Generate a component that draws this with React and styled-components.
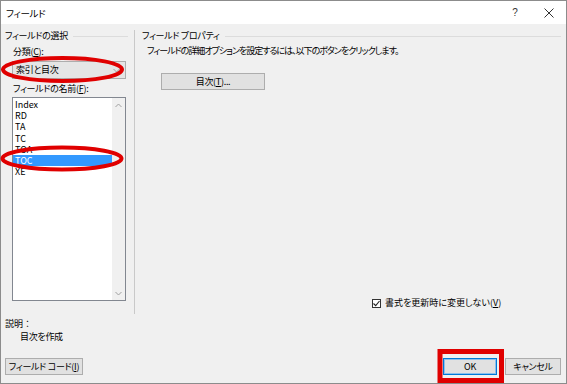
import React from "react";
import styled, { createGlobalStyle } from "styled-components";

const GlobalStyle = createGlobalStyle`
  html, body {
    margin: 0;
    padding: 0;
    background: #ffffff;
  }
  body {
    font-family: "Noto Sans CJK JP", "Noto Sans", sans-serif;
    font-feature-settings: "palt";
    font-size: 9px;
    letter-spacing: -0.3px;
    color: #000000;
  }
  * {
    box-sizing: border-box;
  }
`;

const Window = styled.div`
  position: relative;
  width: 567px;
  height: 384px;
  border: 1px solid #8c8c8c;
  display: flex;
  flex-direction: column;
  background: #f0f0f0;
`;

const TitleBar = styled.div`
  height: 23px;
  flex: none;
  background: #ffffff;
  display: flex;
  align-items: center;
  padding-left: 5px;
`;

const Title = styled.div`
  flex: 1;
  line-height: 12px;
  padding-top: 1px;
  font-size: 9.5px;
`;

const TitleButton = styled.div`
  width: 34px;
  height: 23px;
  display: flex;
  align-items: center;
  justify-content: center;
  color: #333;
  font-family: "Liberation Sans", sans-serif;
  font-size: 10px;
`;

const Body = styled.div`
  flex: 1;
  display: flex;
  flex-direction: column;
`;

const MainRow = styled.div`
  height: 290px;
  flex: none;
  display: flex;
`;

const LeftPanel = styled.div`
  width: 133px;
  flex: none;
  padding: 6px 6px 0 4px;
  display: flex;
  flex-direction: column;
`;

const RightPanel = styled.div`
  flex: 1;
  margin-top: 6px;
  border-left: 1px solid #c9c9c9;
  padding: 0 5px 0 7px;
  display: flex;
  flex-direction: column;
`;

const GroupHeader = styled.div`
  display: flex;
  align-items: center;
  height: 12px;
  line-height: 12px;
  gap: 5px;
  white-space: nowrap;

  &::after {
    content: "";
    flex: 1;
    height: 1px;
    background: #dcdcdc;
  }
`;

const FieldLabel = styled.div`
  line-height: 12px;
  margin-top: ${p => p.$top}px;
  margin-left: 8px;
`;

const Combo = styled.div`
  margin: 3px 2px 0 7px;
  height: 18px;
  background: #e5e5e5;
  border: 1px solid #adadad;
  display: flex;
  align-items: center;
  justify-content: space-between;
  padding: 0 5px 0 3px;
  line-height: 12px;
`;

const ListBox = styled.div`
  margin: 2px 2px 0 7px;
  height: 204px;
  background: #ffffff;
  border: 1px solid #828790;
  display: flex;
`;

const ListItems = styled.div`
  flex: 1;
  padding-top: 1px;
  letter-spacing: 0;
`;

const ListItem = styled.div`
  height: 11.2px;
  line-height: 11.2px;
  padding-left: 2px;
  background: ${p => (p.$selected ? "#3399ff" : "transparent")};
  color: ${p => (p.$selected ? "#ffffff" : "#000000")};
`;

const ScrollBar = styled.div`
  width: 13px;
  flex: none;
  background: #f0f0f0;
  display: flex;
  flex-direction: column;
  justify-content: space-between;
  align-items: center;
  padding: 5px 0 4px;
`;

const Description = styled.p`
  margin: ${p => p.$top}px 0 0;
  padding: 0 0 0 ${p => p.$indent}px;
  line-height: 12px;
`;

const DescLabel = styled(Description)`
  font-feature-settings: normal;
  letter-spacing: 0;
`;

const PropsText = styled.div`
  margin: 3px 0 0 5px;
  line-height: 12px;
  letter-spacing: -1px;
  white-space: nowrap;
`;

const Button = styled.button`
  height: 17px;
  width: ${p => p.$width}px;
  padding: 0;
  font-family: inherit;
  font-feature-settings: "palt";
  font-size: 9px;
  letter-spacing: -0.3px;
  line-height: 12px;
  white-space: nowrap;
  color: #000;
  background: #e1e1e1;
  border: 1px solid ${p => (p.$default ? "#0078d7" : "#adadad")};
  box-shadow: ${p => (p.$default ? "inset 0 0 0 1px #8cc0ec" : "none")};
`;

const TocButton = styled(Button)`
  margin: 16px 0 0 19px;
  align-self: flex-start;
`;

const CheckRow = styled.label`
  margin: auto 0 5px 230px;
  display: flex;
  align-items: center;
  gap: 4px;
  line-height: 12px;
  letter-spacing: 0;
`;

const CheckBox = styled.span`
  width: 9px;
  height: 9px;
  border: 1px solid #333;
  background: #fff;
  display: flex;
  align-items: center;
  justify-content: center;
`;

const Footer = styled.div`
  margin-top: 15px;
  padding: 0 5px 0 4px;
  display: flex;
  align-items: center;
  gap: 8px;
`;

const FooterSpacer = styled.div`
  flex: 1;
`;

const Underline = styled.span`
  text-decoration: underline;
`;

const Marks = styled.svg`
  position: absolute;
  left: -1px;
  top: -1px;
  pointer-events: none;
`;

const Chevron = ({ up }) => (
  <svg width="7" height="5" viewBox="0 0 7 5">
    <path
      d={up ? "M0.5 4 L3.5 1 L6.5 4" : "M0.5 1 L3.5 4 L6.5 1"}
      fill="none"
      stroke="#a0a0a0"
      strokeWidth="1"
    />
  </svg>
);

const fields = ["Index", "RD", "TA", "TC", "TOA", "TOC", "XE"];

export default function App() {
  return (
    <>
      <GlobalStyle />
      <Window>
        <TitleBar>
          <Title>フィールド</Title>
          <TitleButton>?</TitleButton>
          <TitleButton>
            <svg width="10" height="10" viewBox="0 0 10 10">
              <path d="M0.5 0.5 L9.5 9.5 M9.5 0.5 L0.5 9.5" stroke="#333" strokeWidth="1" />
            </svg>
          </TitleButton>
        </TitleBar>
        <Body>
          <MainRow>
            <LeftPanel>
              <GroupHeader>フィールドの選択</GroupHeader>
              <FieldLabel $top={4}>
                分類(<Underline>C</Underline>):
              </FieldLabel>
              <Combo>
                <span>索引と目次</span>
                <Chevron />
              </Combo>
              <FieldLabel $top={4}>
                フィールドの名前(<Underline>F</Underline>):
              </FieldLabel>
              <ListBox>
                <ListItems>
                  {fields.map(f => (
                    <ListItem key={f} $selected={f === "TOC"}>
                      {f}
                    </ListItem>
                  ))}
                </ListItems>
                <ScrollBar>
                  <Chevron up />
                  <Chevron />
                </ScrollBar>
              </ListBox>
            </LeftPanel>
            <RightPanel>
              <GroupHeader>フィールド プロパティ</GroupHeader>
              <PropsText>
                フィールドの詳細オプションを設定するには、以下のボタンをクリックします。
              </PropsText>
              <TocButton $width={104}>
                目次(<Underline>T</Underline>)...
              </TocButton>
              <CheckRow>
                <CheckBox>
                  <svg width="7" height="7" viewBox="0 0 7 7">
                    <path d="M0.5 3.5 L2.7 5.7 L6.5 1" fill="none" stroke="#222" strokeWidth="1.1" />
                  </svg>
                </CheckBox>
                <span>
                  書式を更新時に変更しない(<Underline>V</Underline>)
                </span>
              </CheckRow>
            </RightPanel>
          </MainRow>
          <DescLabel $top={4} $indent={4}>説明：</DescLabel>
          <Description $top={1} $indent={19}>目次を作成</Description>
          <Footer>
            <Button $width={78}>
              フィールド コード(<Underline>I</Underline>)
            </Button>
            <FooterSpacer />
            <Button $width={54} $default>
              OK
            </Button>
            <Button $width={56}>キャンセル</Button>
          </Footer>
        </Body>
        <Marks width="567" height="384" viewBox="0 0 567 384">
          <ellipse cx="62.5" cy="69.5" rx="59.5" ry="11.5" fill="none" stroke="#e00000" strokeWidth="4" />
          <ellipse cx="62" cy="158.5" rx="59.5" ry="11" fill="none" stroke="#e00000" strokeWidth="4" />
          <rect x="440" y="351.5" width="61.5" height="29" fill="none" stroke="#e00000" strokeWidth="5" />
        </Marks>
      </Window>
    </>
  );
}
